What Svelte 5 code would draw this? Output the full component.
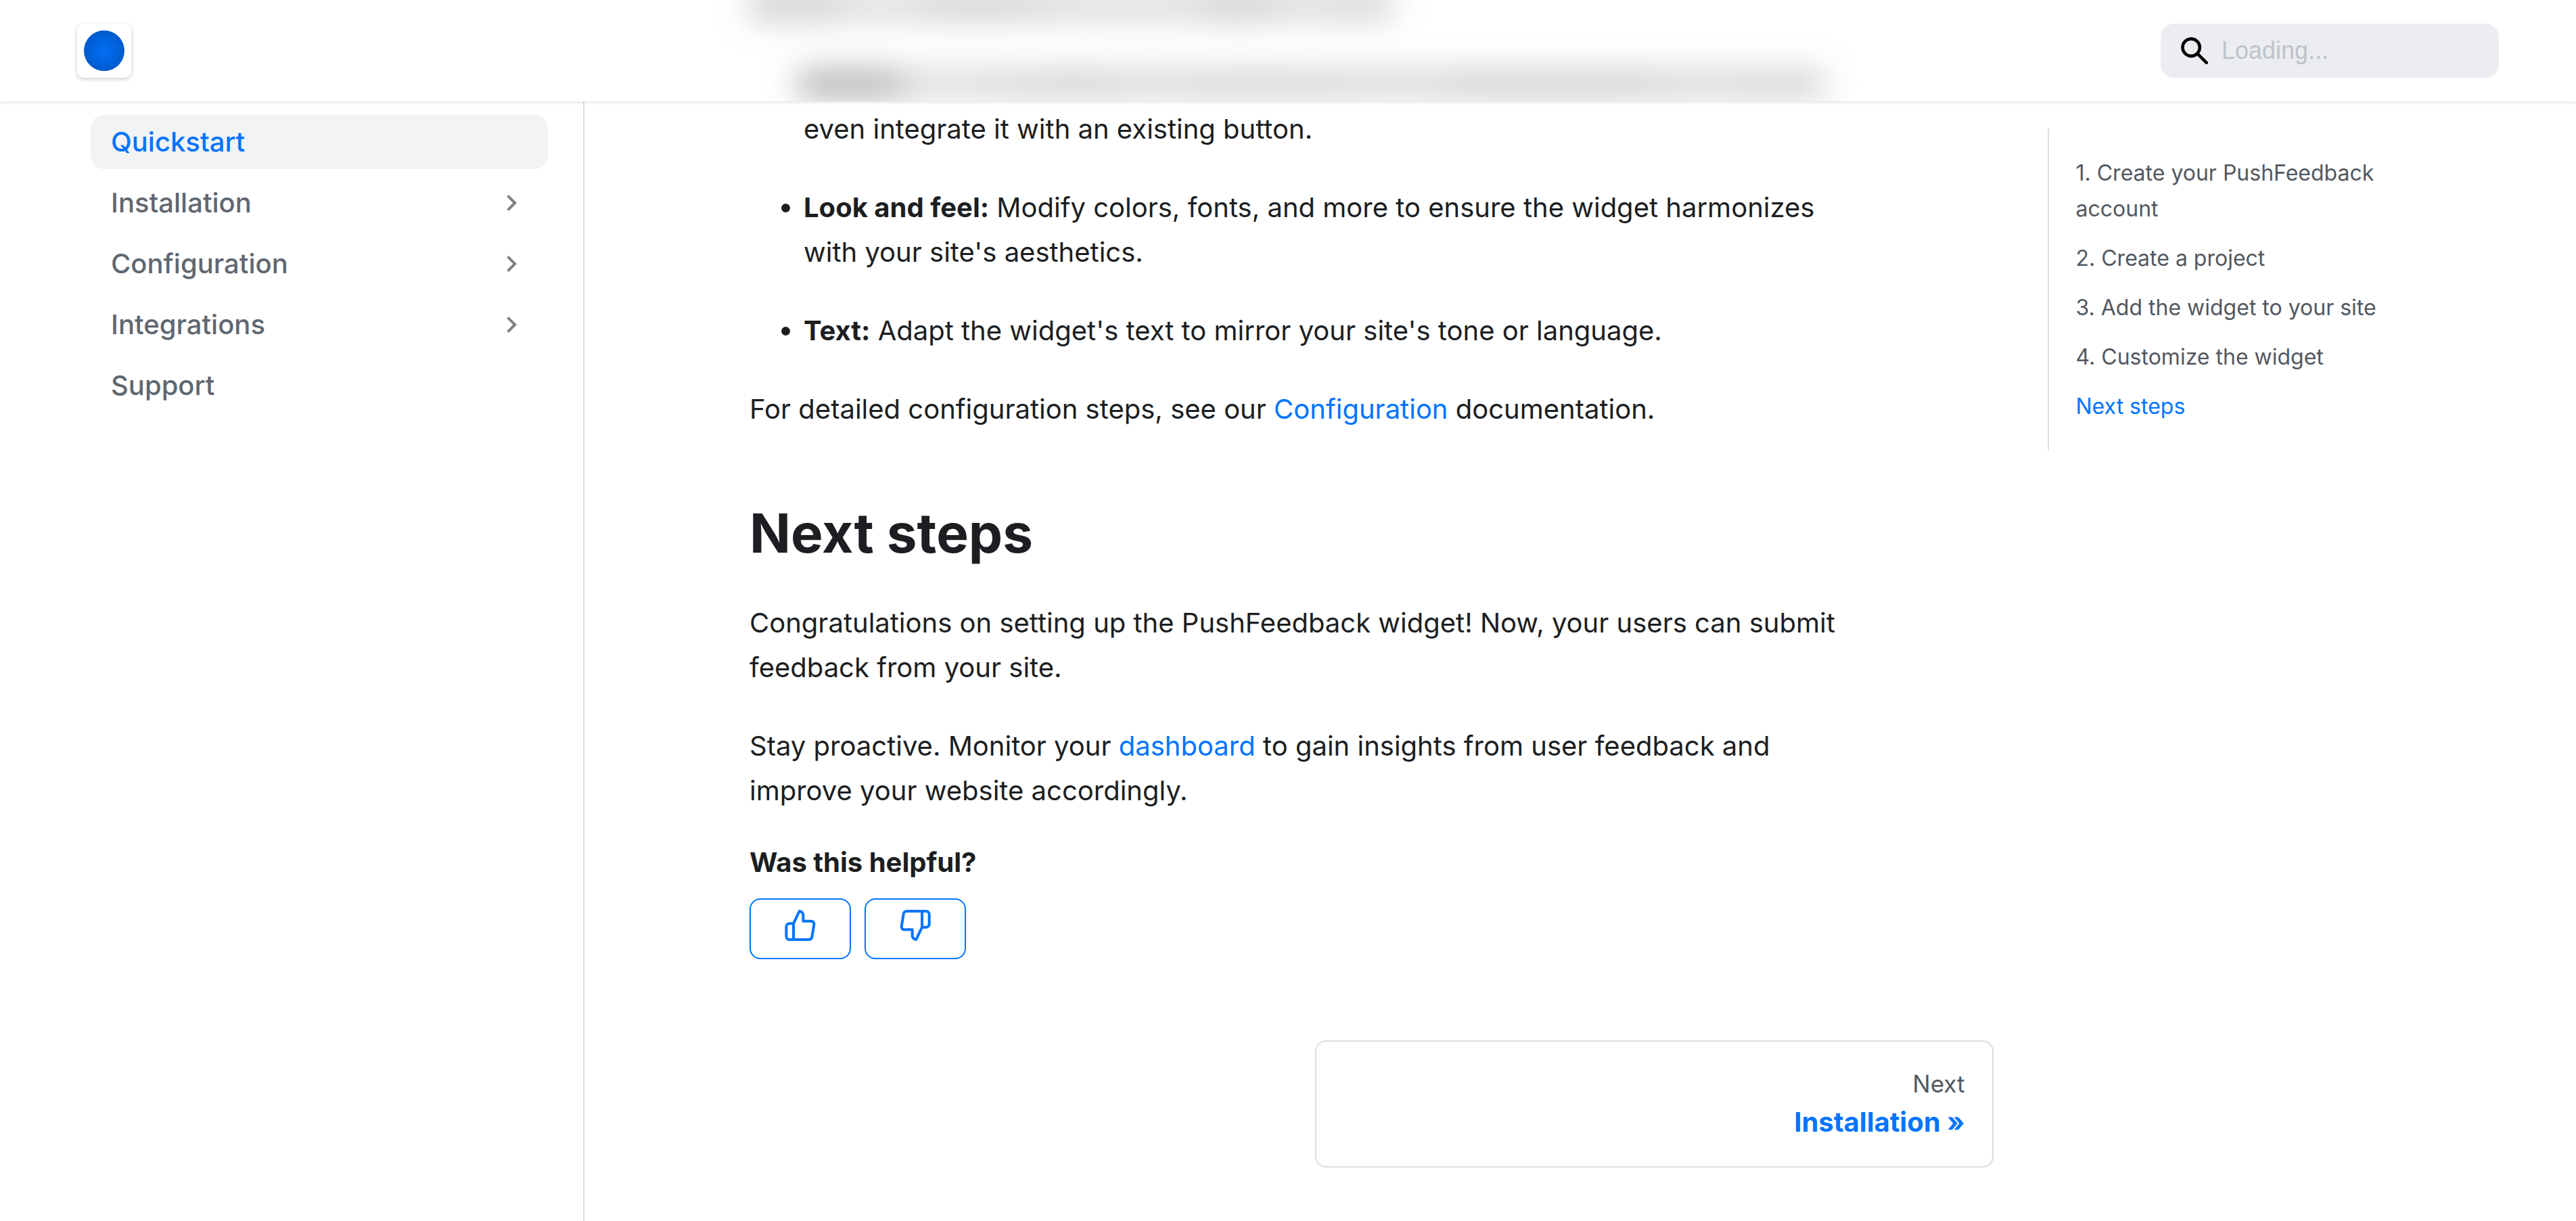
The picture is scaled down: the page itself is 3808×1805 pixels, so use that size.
<script>
  const menu = [
    { label: 'Quickstart', active: true },
    { label: 'Installation', nested: true },
    { label: 'Configuration', nested: true },
    { label: 'Integrations', nested: true },
    { label: 'Support' }
  ];

  const toc = [
    '1. Create your PushFeedback account',
    '2. Create a project',
    '3. Add the widget to your site',
    '4. Customize the widget',
    'Next steps'
  ];
  const current = 'Next steps';
</script>

{#snippet thumb()}
  <svg class="thumb" viewBox="0 0 136 138" aria-hidden="true">
    <path
      d="M38 61H20a14 14 0 0 0-14 14V118a14 14 0 0 0 14 14H106a14 14 0 0 0 14-12L129 65a13 13 0 0 0-13-15H81V26a18 18 0 0 0-17-20L38 61V132"
    />
  </svg>
{/snippet}

<header class="navbar">
  <!-- frosted traces of the lines scrolled behind the bar -->
  <div class="frost" aria-hidden="true">
    <div class="trace short"></div>
    <div class="trace long"></div>
  </div>
  <a class="logo" href="#home" aria-label="Home"><span class="dot"></span></a>
  <label class="search">
    <svg viewBox="0 0 16 16" aria-hidden="true">
      <path
        d="M6.02945,10.20327a4.17382,4.17382,0,1,1,4.17382-4.17382A4.15609,4.15609,0,0,1,6.02945,10.20327Zm9.69195,4.2199L10.8989,9.59979A5.88021,5.88021,0,0,0,12.058,6.02856,6.00467,6.00467,0,1,0,9.59979,10.8989l4.82338,4.82338a.89729.89729,0,0,0,1.29912,0,.89749.89749,0,0,0-.00087-1.29909Z"
      />
    </svg>
    <input type="search" placeholder="Loading..." aria-label="Search" />
  </label>
</header>

<div class="layout">
  <aside class="sidebar">
    <nav aria-label="Docs sidebar">
      <ul class="menu">
        {#each menu as item}
          <li>
            <a class="menu-link" class:active={item.active} href="#{item.label.toLowerCase()}">
              {item.label}
              {#if item.nested}
                <svg class="caret" viewBox="0 0 24 24" aria-hidden="true">
                  <path d="M8.59 16.59 13.17 12 8.59 7.41 10 6l6 6-6 6z" />
                </svg>
              {/if}
            </a>
          </li>
        {/each}
      </ul>
    </nav>
  </aside>

  <main>
    <div class="content">
      <article>
        <ul>
          <li class="continued">even integrate it with an existing button.</li>
          <li>
            <strong>Look and feel:</strong> Modify colors, fonts, and more to ensure the widget
            harmonizes with your site's aesthetics.
          </li>
          <li>
            <strong>Text:</strong> Adapt the widget's text to mirror your site's tone or language.
          </li>
        </ul>
        <p>
          For detailed configuration steps, see our <a href="#configuration">Configuration</a>
          documentation.
        </p>
        <h2>Next steps</h2>
        <p>
          Congratulations on setting up the PushFeedback widget! Now, your users can submit feedback
          from your site.
        </p>
        <p>
          Stay proactive. Monitor your <a href="#dashboard">dashboard</a> to gain insights from user
          feedback and improve your website accordingly.
        </p>
      </article>

      <section class="feedback">
        <strong>Was this helpful?</strong>
        <div class="votes">
          <button type="button" aria-label="Yes">{@render thumb()}</button>
          <button type="button" class="down" aria-label="No">{@render thumb()}</button>
        </div>
      </section>

      <nav class="pagination" aria-label="Docs pages">
        <a class="next" href="#installation">
          <span class="sub">Next</span>
          <span class="title">Installation »</span>
        </a>
      </nav>
    </div>

    <nav class="toc" aria-label="On this page">
      <ul>
        {#each toc as entry}
          <li><a href="#toc" class:current={entry === current}>{entry}</a></li>
        {/each}
      </ul>
    </nav>
  </main>
</div>

<style>
  :global(body) {
    background: #fff;
    color: #1c1e21;
    font: 400 40px/66px Inter, sans-serif;
  }

  a {
    color: #0074ff;
    text-decoration: none;
  }

  ul {
    margin: 0;
    padding: 0;
    list-style: none;
  }

  .navbar {
    position: fixed;
    inset: 0 0 auto;
    z-index: 1;
    box-sizing: border-box;
    height: 150px;
    padding: 0 114px;
    display: flex;
    align-items: center;
    justify-content: space-between;
    background: #fff;
    box-shadow: 0 2px 4px rgba(0, 0, 0, 0.1);
  }

  .frost {
    position: absolute;
    inset: 0;
    overflow: hidden;
  }

  .trace {
    position: absolute;
    height: 40px;
    filter: blur(24px);
  }

  .trace.short {
    top: -12px;
    left: 1108px;
    width: 950px;
    background: linear-gradient(
      90deg,
      #c8c9c9 0 12%,
      #d8d9d9 16% 24%,
      #cbcccc 30% 40%,
      #d6d7d7 50% 68%,
      #c6c7c7 74% 78%,
      #d6d7d7 84%,
      #cecfcf
    );
  }

  .trace.long {
    top: 104px;
    left: 1180px;
    width: 1520px;
    background: linear-gradient(
      90deg,
      #adaeae 0 9%,
      #d8d9d9 11% 16%,
      #cccdcd 27%,
      #d6d7d7 34%,
      #cecfcf 44%,
      #d6d7d7 60%,
      #cbcccc 66% 80%,
      #d6d7d7 88%,
      #cecfcf 95%,
      #d6d7d7
    );
  }

  .logo {
    position: relative;
    display: grid;
    place-items: center;
    width: 80px;
    height: 80px;
    border-radius: 10px;
    background: #fff;
    box-shadow: 0 2px 6px rgba(0, 0, 0, 0.2);
  }

  .dot {
    width: 60px;
    height: 60px;
    border-radius: 50%;
    background: radial-gradient(circle, #006ff5, #0052bd);
  }

  .search {
    position: relative;
    box-sizing: border-box;
    width: 500px;
    height: 80px;
    padding: 0 30px;
    display: flex;
    align-items: center;
    gap: 20px;
    border-radius: 20px;
    background: #ebedf0;
  }

  .search svg {
    flex: none;
    width: 40px;
    height: 40px;
  }

  .search input {
    min-width: 0;
    flex: 1;
    padding: 0;
    border: 0;
    outline: 0;
    background: none;
    font: 400 36px 'Liberation Sans', sans-serif;
  }

  .search input::placeholder {
    color: #bec3c9;
    opacity: 1;
  }

  .layout {
    display: flex;
    min-height: 100vh;
  }

  .sidebar {
    box-sizing: border-box;
    flex: 0 0 864px;
    padding: 170px 52px 0 134px;
    border-right: 2px solid #dadde1;
  }

  .menu {
    display: grid;
    gap: 10px;
  }

  .menu-link {
    display: flex;
    align-items: center;
    justify-content: space-between;
    height: 80px;
    padding: 0 30px;
    border-radius: 20px;
    color: #606770;
    font-weight: 500;
  }

  .menu-link.active {
    background: #f2f3f5;
    color: #0074ff;
  }

  .caret {
    width: 48px;
    height: 48px;
    fill: #808080;
  }

  main {
    flex: 1;
    min-width: 0;
    padding: 0 182px 0 204px;
    display: grid;
    grid-template-columns: 3fr 1fr;
    align-items: start;
  }

  .content {
    padding: 158px 40px 0;
  }

  article {
    max-width: 1640px;
    margin-bottom: 40px;
  }

  article p {
    margin: 0 0 50px;
  }

  article p:last-child {
    margin-bottom: 0;
  }

  article ul {
    display: grid;
    gap: 50px;
    margin-bottom: 50px;
    padding-left: 80px;
    list-style: disc;
  }

  .continued {
    list-style: none;
  }

  strong {
    font-weight: 700;
  }

  h2 {
    margin: 100px 0 50px;
    font-size: 80px;
    font-weight: 700;
    line-height: 100px;
  }

  .votes {
    display: flex;
    gap: 20px;
    margin-top: 20px;
  }

  .votes button {
    box-sizing: border-box;
    width: 150px;
    height: 90px;
    padding: 0 0 10px;
    display: grid;
    place-items: center;
    border: 2px solid #0074ff;
    border-radius: 16px;
    background: none;
  }

  .thumb {
    width: 46px;
    height: 46px;
    fill: none;
    stroke: #0074ff;
    stroke-width: 12;
    stroke-linejoin: round;
  }

  .down .thumb {
    rotate: 180deg;
  }

  .pagination {
    display: grid;
    grid-template-columns: 5fr 6fr;
    margin-top: 120px;
  }

  .next {
    grid-column: 2;
    padding: 40px;
    display: grid;
    gap: 10px;
    text-align: right;
    border: 2px solid #dadde1;
    border-radius: 16px;
  }

  .sub {
    color: #525860;
    font-size: 35px;
    line-height: 44px;
  }

  .title {
    font-weight: 700;
    line-height: 50px;
  }

  .toc {
    padding: 190px 40px 0;
  }

  .toc ul {
    display: grid;
    gap: 20px;
    padding: 39px 0 39px 40px;
    border-left: 2px solid #dadde1;
    font-size: 32px;
    line-height: 53px;
  }

  .toc a {
    color: #525860;
  }

  .toc a.current {
    color: #0074ff;
  }
</style>
